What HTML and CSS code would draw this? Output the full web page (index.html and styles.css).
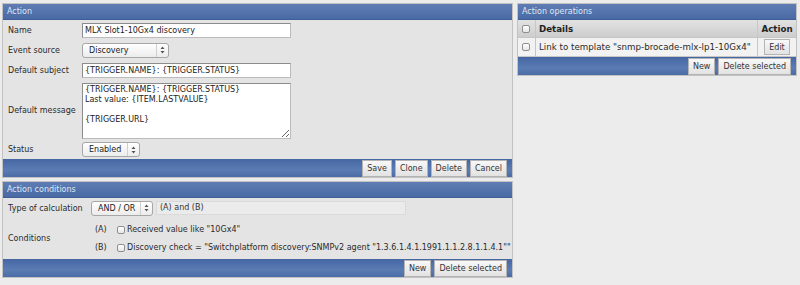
FILE: index.html
```html
<!DOCTYPE html>
<html>
<head>
<meta charset="utf-8">
<title>Action</title>
<link rel="stylesheet" href="styles.css">
</head>
<body>
<div class="page">
  <div class="leftcol">
    <section class="panel">
      <div class="phead">Action</div>
      <div class="pbody form-action">
        <div class="lbl">Name</div>
        <div class="ctl"><input class="txt w209" type="text" value="MLX Slot1-10Gx4 discovery"></div>
        <div class="lbl">Event source</div>
        <div class="ctl"><span class="sel w87"><span class="sel-text">Discovery</span><span class="sel-arr"><svg width="5" height="8" viewBox="0 0 5 8"><path d="M2.5 0.5L4.5 3H0.5Z M2.5 7.5L4.5 5H0.5Z" fill="#555"/></svg></span></span></div>
        <div class="lbl">Default subject</div>
        <div class="ctl"><input class="txt w209" type="text" value="{TRIGGER.NAME}: {TRIGGER.STATUS}"></div>
        <div class="lbl">Default message</div>
        <div class="ctl"><textarea class="area" readonly>{TRIGGER.NAME}: {TRIGGER.STATUS}
Last value: {ITEM.LASTVALUE}

{TRIGGER.URL}</textarea></div>
        <div class="lbl">Status</div>
        <div class="ctl"><span class="sel w58"><span class="sel-text">Enabled</span><span class="sel-arr"><svg width="5" height="8" viewBox="0 0 5 8"><path d="M2.5 0.5L4.5 3H0.5Z M2.5 7.5L4.5 5H0.5Z" fill="#555"/></svg></span></span></div>
      </div>
      <div class="pfoot">
        <button class="btn">Save</button>
        <button class="btn">Clone</button>
        <button class="btn">Delete</button>
        <button class="btn">Cancel</button>
      </div>
    </section>

    <section class="panel">
      <div class="phead">Action conditions</div>
      <div class="pbody form-cond">
        <div class="lbl">Type of calculation</div>
        <div class="ctl calc">
          <span class="sel w62"><span class="sel-text">AND / OR</span><span class="sel-arr"><svg width="5" height="8" viewBox="0 0 5 8"><path d="M2.5 0.5L4.5 3H0.5Z M2.5 7.5L4.5 5H0.5Z" fill="#555"/></svg></span></span>
          <span class="formula">(A) and (B)</span>
        </div>
        <div class="lbl">Conditions</div>
        <div class="ctl conds">
          <div class="cond"><span class="cid">(A)</span><span class="chk"></span><span>Received value like "10Gx4"</span></div>
          <div class="cond"><span class="cid">(B)</span><span class="chk"></span><span>Discovery check = "Switchplatform discovery:SNMPv2 agent "1.3.6.1.4.1.1991.1.1.2.8.1.1.4.1""</span></div>
        </div>
      </div>
      <div class="pfoot">
        <button class="btn">New</button>
        <button class="btn">Delete selected</button>
      </div>
    </section>
  </div>

  <section class="panel ops">
    <div class="phead">Action operations</div>
    <div class="ops-table">
      <div class="th c-chk"><span class="chk"></span></div>
      <div class="th c-det">Details</div>
      <div class="th c-act">Action</div>
      <div class="td c-chk"><span class="chk"></span></div>
      <div class="td c-det">Link to template "snmp-brocade-mlx-lp1-10Gx4"</div>
      <div class="td c-act"><button class="btn">Edit</button></div>
    </div>
    <div class="pfoot">
      <button class="btn">New</button>
      <button class="btn">Delete selected</button>
    </div>
  </section>
</div>
</body>
</html>
```

FILE: styles.css
```css
* { box-sizing: border-box; }
html, body {
  margin: 0;
  padding: 0;
  background: #ececec;
}
body {
  font-family: "DejaVu Sans", Verdana, sans-serif;
  font-size: 8px;
  color: #2a2a2a;
}
.page {
  display: flex;
  align-items: flex-start;
  gap: 4px;
  padding: 3px 3px 0 2px;
}
.leftcol {
  width: 511px;
  display: flex;
  flex-direction: column;
  gap: 3px;
}
.panel {
  border: 1px solid #c2c2c2;
  background: #e4e4e4;
}
.ops {
  width: 280px;
}
.phead {
  height: 16px;
  line-height: 15px;
  padding-left: 4px;
  color: #dfe7f4;
  background: linear-gradient(#5f7db3, #4a6aa5);
  border-bottom: 1px solid #3f5e98;
}
.pbody {
  display: grid;
  grid-template-columns: 79px 1fr;
}
.form-action {
  grid-template-rows: 20px 20px 21px 59px 19px;
}
.form-cond {
  grid-template-columns: 85px 1fr;
  grid-template-rows: 20px 41px;
}
.lbl {
  display: flex;
  align-items: center;
  padding-left: 5px;
}
.ctl {
  display: flex;
  align-items: center;
}
.txt {
  height: 15px;
  font: inherit;
  color: #222;
  padding: 0 2px;
  border: 1px solid #9a9a9a;
  border-color: #8c8c8c #bbbbbb #bbbbbb #8c8c8c;
  background: #fff;
  outline: none;
}
.w209 { width: 209px; }
.area {
  width: 209px;
  height: 56px;
  font: inherit;
  line-height: 10px;
  color: #222;
  padding: 1px 2px;
  border: 1px solid #9a9a9a;
  border-color: #8c8c8c #bbbbbb #bbbbbb #8c8c8c;
  background: #fff;
  resize: both;
  overflow: hidden;
  outline: none;
}
.sel {
  display: inline-flex;
  align-items: center;
  height: 15px;
  border: 1px solid #a7a7a7;
  border-radius: 3px;
  background: linear-gradient(#ffffff, #ececec);
  color: #222;
}
.sel-text {
  flex: 1;
  padding-left: 6px;
}
.sel-arr {
  width: 12px;
  height: 100%;
  display: flex;
  align-items: center;
  justify-content: center;
  border-left: 1px solid #cfcfcf;
}
.w87 { width: 87px; }
.w58 { width: 58px; }
.w62 { width: 62px; margin-left: 3px; }
.calc { gap: 3px; }
.formula {
  width: 250px;
  height: 14px;
  line-height: 12px;
  padding-left: 3px;
  border: 1px solid #dadada;
  background: #ebebeb;
  color: #333;
}
.conds {
  flex-direction: column;
  align-items: flex-start;
  justify-content: center;
  gap: 7px;
}
.cond {
  display: flex;
  align-items: center;
  padding-left: 7px;
  height: 11px;
}
.cid {
  width: 22px;
}
.chk {
  display: inline-block;
  width: 8px;
  height: 8px;
  border: 1px solid #8f8f8f;
  border-radius: 2px;
  background: linear-gradient(#ffffff, #e6e6e6);
  margin-right: 2px;
}
.pfoot {
  height: 18px;
  display: flex;
  justify-content: flex-end;
  align-items: flex-start;
  gap: 3px;
  padding: 1px 5px 0 0;
  background: linear-gradient(#4567a3, #5b7bb3 60%, #4c6ca7);
}
.btn {
  height: 17px;
  font: inherit;
  color: #333;
  padding: 0 4px;
  border: 1px solid #b4b4b4;
  background: linear-gradient(#f8f8f8, #e2e2e2);
  border-radius: 0;
  cursor: pointer;
}
.ops-table {
  display: grid;
  grid-template-columns: 18px 222px 38px;
  grid-template-rows: 18px 19px;
  font-size: 8.7px;
}
.th, .td {
  display: flex;
  align-items: center;
  border-right: 1px solid #c6c6c6;
  border-bottom: 1px solid #c6c6c6;
  white-space: nowrap;
  overflow: hidden;
}
.th {
  background: linear-gradient(#e2e2e2, #cdcdcd);
  font-weight: bold;
  color: #222;
}
.td {
  background: #f2f2f2;
}
.c-chk {
  justify-content: center;
}
.c-det {
  padding-left: 3px;
}
.c-act {
  border-right: none;
  justify-content: center;
}
.td.c-act .btn {
  height: 16px;
  font-size: 8px;
}
```
